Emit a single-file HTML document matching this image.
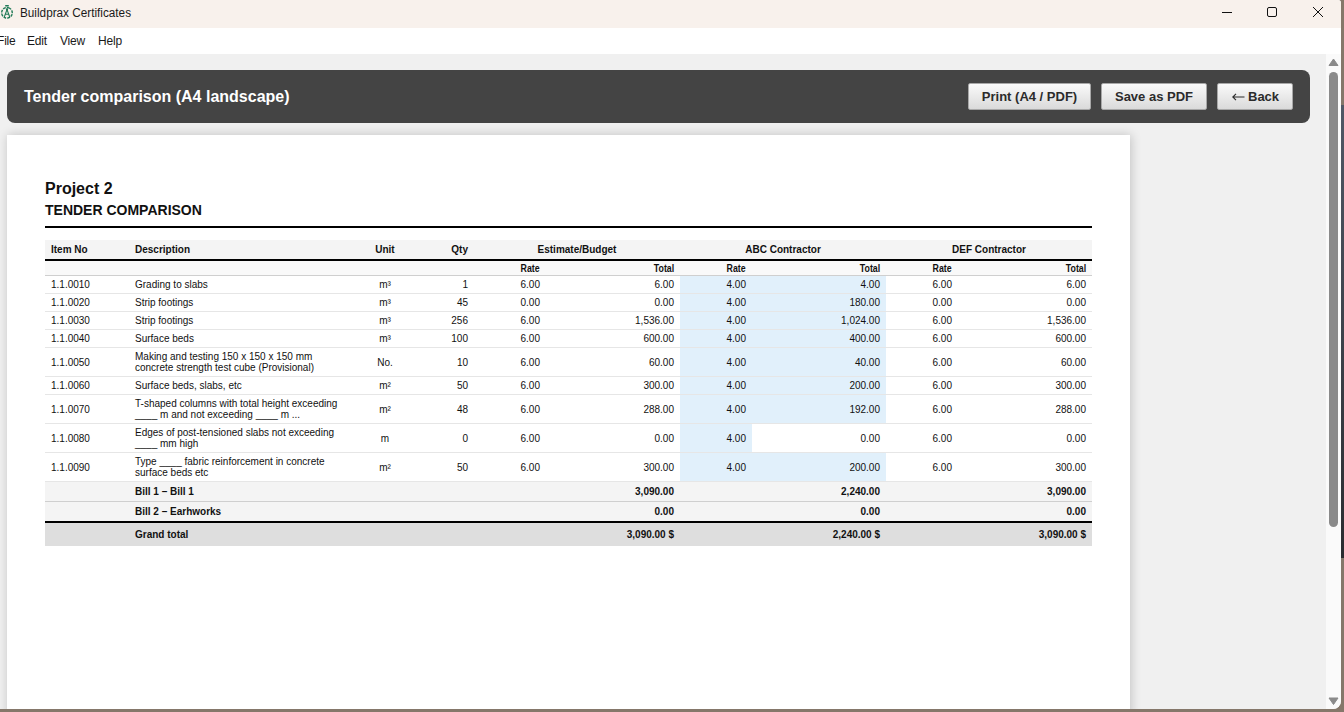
<!DOCTYPE html>
<html><head><meta charset="utf-8">
<style>
*{margin:0;padding:0;box-sizing:border-box}
html,body{width:1344px;height:712px;overflow:hidden;background:#85776a;font-family:"Liberation Sans",sans-serif}
#dstrip{position:absolute;left:1340px;top:105px;width:4px;height:453px;background:linear-gradient(#505866,#2a2c30)}
#win{position:absolute;left:0;top:0;width:1341px;height:709px;background:#f0f0f0;border-bottom-right-radius:8px;border-top-right-radius:3px;overflow:hidden}
#titlebar{position:absolute;left:0;top:0;width:1341px;height:28px;background:#f8f1ec}
#titlebar .t{position:absolute;left:20px;top:6px;font-size:12.5px;transform:scaleX(0.94);transform-origin:0 50%;color:#1a1a1a;white-space:nowrap}
#menubar{position:absolute;left:0;top:28px;width:1341px;height:26px;background:#fff}
#menubar span{position:absolute;top:6px;font-size:12px;color:#1a1a1a;letter-spacing:-0.2px}
#scroll{position:absolute;left:1326px;top:54px;width:15px;height:655px;background:#fafafa}
#thumb{position:absolute;left:3px;top:18px;width:9px;height:455px;background:#8a8a8a;border-radius:5px}
#hdr{position:absolute;left:7px;top:70px;width:1303px;height:53px;background:#444;border-radius:8px}
#hdr h1{position:absolute;left:17px;top:18px;font-size:16px;font-weight:bold;color:#fff}
.btn{position:absolute;top:13px;height:27px;border:1px solid #a8a8a8;border-radius:2px;background:linear-gradient(#fafafa,#dadada);font-size:13px;font-weight:bold;color:#2b2b2b;text-align:center;line-height:25px}
#paper{position:absolute;left:7px;top:135px;width:1123px;height:600px;background:#fff;box-shadow:1px 0 10px rgba(0,0,0,.2)}
#p2{position:absolute;left:38px;top:45px;font-size:16px;font-weight:bold;color:#111}
#tc{position:absolute;left:38px;top:67px;font-size:14px;font-weight:bold;color:#111}
#rule{position:absolute;left:38px;top:91px;width:1047px;height:2px;background:#000}
table{position:absolute;left:38px;top:105px;width:1047px;border-collapse:collapse;table-layout:fixed;font-size:10px;line-height:11px;color:#111}
td,th{padding:3px 6px;white-space:nowrap;text-align:left;vertical-align:middle}
.c{text-align:center}.r{text-align:right}
tr.h1 th{background:#f4f4f4;padding:4px 6px;border-bottom:2px solid #000;font-weight:bold;color:#111}
tr.h2 th{background:#f9f9f9;padding:2px 6px 1px;border-bottom:1px solid #cfcfcf;font-size:10px;font-weight:bold;color:#111}
tr.h2 th span{display:inline-block;transform:scaleX(0.88);transform-origin:100% 50%}
tr.d td{border-bottom:1px solid #e6e6e6}
td.hl{background:#e1f0fb}
tr.b td{background:#f4f4f4;padding:4px 6px;font-weight:bold;color:#111}
tr.b1 td{border-bottom:1px solid #cfcfcf}
tr.g td{background:#dedede;padding:6px 6px;font-weight:bold;color:#111;border-top:2px solid #000}
</style></head><body>
<div id="dstrip"></div>
<div id="win">
 <div id="titlebar">
  <svg style="position:absolute;left:0;top:0" width="15" height="24" viewBox="0 0 15 24"><g fill="none" stroke="#217a57"><circle cx="7" cy="12.8" r="5.3" stroke-width="1.4" stroke-dasharray="2.8 1.0" transform="rotate(-70 7 12.8)"/><path d="M4.2 17.2 L7 9.6 L9.8 17.2 M5.3 14.3 H8.7" stroke-width="1.1"/></g><rect x="5.2" y="5" width="3.6" height="1.5" fill="#217a57"/><circle cx="7" cy="9.4" r="1.1" fill="#217a57"/></svg>
  <div class="t">Buildprax Certificates</div>
  <svg style="position:absolute;left:1216px;top:0" width="120" height="28" viewBox="0 0 120 28"><g fill="none" stroke="#111" stroke-width="1"><path d="M6 12.5 H16"/><rect x="51.5" y="7.5" width="9" height="9" rx="1.5"/><path d="M97 7 L107 17 M107 7 L97 17"/></g></svg>
 </div>
 <div id="menubar"><span style="left:-3px">File</span><span style="left:27px">Edit</span><span style="left:60px">View</span><span style="left:98px">Help</span></div>
 <div id="hdr"><h1>Tender comparison (A4 landscape)</h1>
  <div class="btn" style="left:961px;width:123px">Print (A4 / PDF)</div>
  <div class="btn" style="left:1094px;width:106px">Save as PDF</div>
  <div class="btn" style="left:1210px;width:76px"><svg style="position:absolute;left:14px;top:9px" width="13" height="8" viewBox="0 0 13 8"><path d="M0.8 4 H12.5 M4 0.8 L0.8 4 L4 7.2" fill="none" stroke="#2b2b2b" stroke-width="1.1"/></svg><span style="position:absolute;left:30px;top:0">Back</span></div>
 </div>
 <div id="paper">
  <div id="p2">Project 2</div>
  <div id="tc">TENDER COMPARISON</div>
  <div id="rule"></div>
  <table>
   <colgroup><col style="width:84px"><col style="width:216px"><col style="width:80px"><col style="width:49px"><col style="width:72px"><col style="width:134px"><col style="width:72px"><col style="width:134px"><col style="width:72px"><col style="width:134px"></colgroup>
   <tr class="h1"><th>Item No</th><th>Description</th><th class="c">Unit</th><th class="r">Qty</th><th class="c" colspan="2">Estimate/Budget</th><th class="c" colspan="2">ABC Contractor</th><th class="c" colspan="2">DEF Contractor</th></tr>
   <tr class="h2"><th></th><th></th><th></th><th></th><th class="r"><span>Rate</span></th><th class="r"><span>Total</span></th><th class="r"><span>Rate</span></th><th class="r"><span>Total</span></th><th class="r"><span>Rate</span></th><th class="r"><span>Total</span></th></tr>
<tr class="d"><td>1.1.0010</td><td>Grading to slabs</td><td class="c">m³</td><td class="r">1</td><td class="r">6.00</td><td class="r">6.00</td><td class="r hl">4.00</td><td class="r hl">4.00</td><td class="r">6.00</td><td class="r">6.00</td></tr>
<tr class="d"><td>1.1.0020</td><td>Strip footings</td><td class="c">m³</td><td class="r">45</td><td class="r">0.00</td><td class="r">0.00</td><td class="r hl">4.00</td><td class="r hl">180.00</td><td class="r">0.00</td><td class="r">0.00</td></tr>
<tr class="d"><td>1.1.0030</td><td>Strip footings</td><td class="c">m³</td><td class="r">256</td><td class="r">6.00</td><td class="r">1,536.00</td><td class="r hl">4.00</td><td class="r hl">1,024.00</td><td class="r">6.00</td><td class="r">1,536.00</td></tr>
<tr class="d"><td>1.1.0040</td><td>Surface beds</td><td class="c">m³</td><td class="r">100</td><td class="r">6.00</td><td class="r">600.00</td><td class="r hl">4.00</td><td class="r hl">400.00</td><td class="r">6.00</td><td class="r">600.00</td></tr>
<tr class="d"><td>1.1.0050</td><td>Making and testing 150 x 150 x 150 mm<br>concrete strength test cube (Provisional)</td><td class="c">No.</td><td class="r">10</td><td class="r">6.00</td><td class="r">60.00</td><td class="r hl">4.00</td><td class="r hl">40.00</td><td class="r">6.00</td><td class="r">60.00</td></tr>
<tr class="d"><td>1.1.0060</td><td>Surface beds, slabs, etc</td><td class="c">m²</td><td class="r">50</td><td class="r">6.00</td><td class="r">300.00</td><td class="r hl">4.00</td><td class="r hl">200.00</td><td class="r">6.00</td><td class="r">300.00</td></tr>
<tr class="d"><td>1.1.0070</td><td>T-shaped columns with total height exceeding<br>____ m and not exceeding ____ m ...</td><td class="c">m²</td><td class="r">48</td><td class="r">6.00</td><td class="r">288.00</td><td class="r hl">4.00</td><td class="r hl">192.00</td><td class="r">6.00</td><td class="r">288.00</td></tr>
<tr class="d"><td>1.1.0080</td><td>Edges of post-tensioned slabs not exceeding<br>____ mm high</td><td class="c">m</td><td class="r">0</td><td class="r">6.00</td><td class="r">0.00</td><td class="r hl">4.00</td><td class="r">0.00</td><td class="r">6.00</td><td class="r">0.00</td></tr>
<tr class="d"><td>1.1.0090</td><td>Type ____ fabric reinforcement in concrete<br>surface beds etc</td><td class="c">m²</td><td class="r">50</td><td class="r">6.00</td><td class="r">300.00</td><td class="r hl">4.00</td><td class="r hl">200.00</td><td class="r">6.00</td><td class="r">300.00</td></tr>
   <tr class="b b1"><td></td><td>Bill 1 – Bill 1</td><td></td><td></td><td></td><td class="r">3,090.00</td><td></td><td class="r">2,240.00</td><td></td><td class="r">3,090.00</td></tr>
   <tr class="b"><td></td><td>Bill 2 – Earhworks</td><td></td><td></td><td></td><td class="r">0.00</td><td></td><td class="r">0.00</td><td></td><td class="r">0.00</td></tr>
   <tr class="g"><td></td><td>Grand total</td><td></td><td></td><td></td><td class="r">3,090.00 $</td><td></td><td class="r">2,240.00 $</td><td></td><td class="r">3,090.00 $</td></tr>
  </table>
 </div>
 <div id="scroll"><svg style="position:absolute;left:0;top:0" width="15" height="655" viewBox="0 0 15 655"><path d="M3 11.5 L7.5 5 L12 11.5 Z" fill="#8a8a8a" stroke="#8a8a8a" stroke-linejoin="round"/><path d="M3 644 L7.5 650.5 L12 644 Z" fill="#8a8a8a" stroke="#8a8a8a" stroke-linejoin="round"/></svg><div id="thumb"></div></div>
</div>
</body></html>
